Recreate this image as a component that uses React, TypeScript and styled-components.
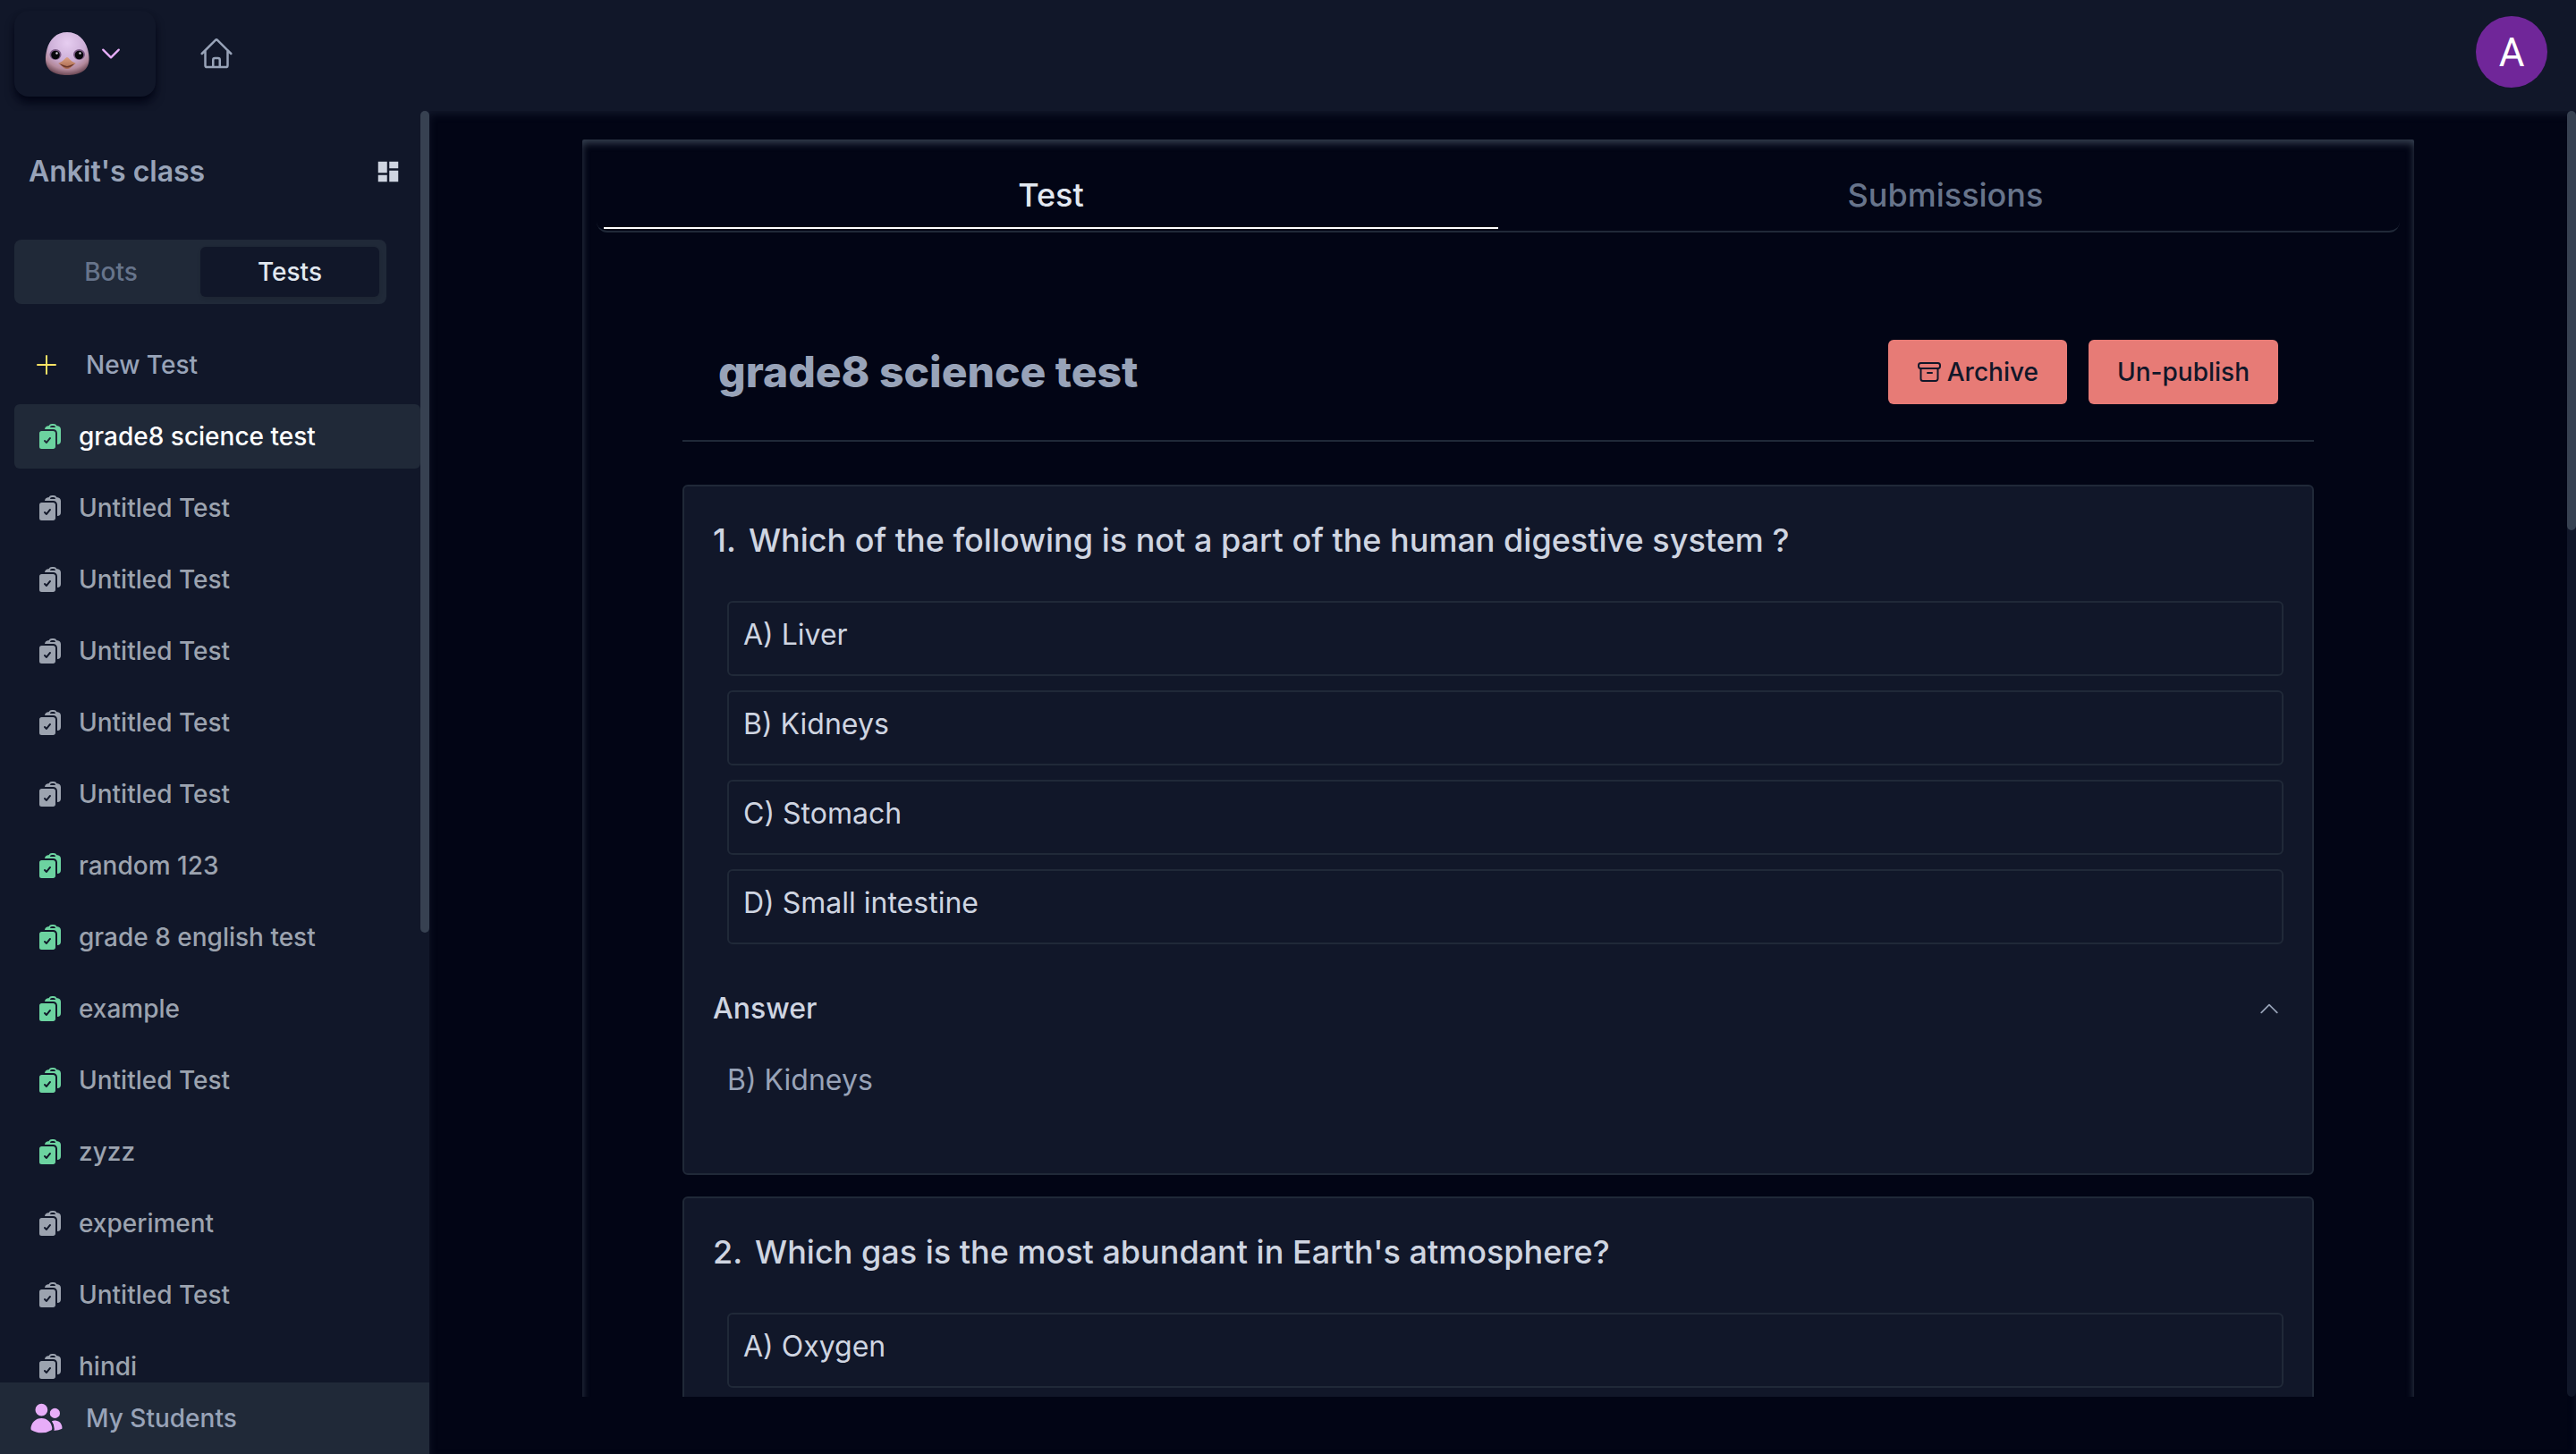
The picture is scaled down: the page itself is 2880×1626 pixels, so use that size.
import React, { useState } from "react";
import styled, { createGlobalStyle } from "styled-components";
import {
  HiOutlineHome,
  HiOutlinePlus,
  HiOutlineChevronUp,
  HiOutlineChevronDown,
  HiClipboardDocumentCheck,
  HiUsers,
} from "react-icons/hi2";
import { MdDashboard } from "react-icons/md";

const color = {
  page: "#020515",
  surface: "#111729",
  raised: "#202938",
  thumb: "#374151",
  text: "#cfd5e1",
  bright: "#e2e8f0",
  muted: "#98a3b8",
  dim: "#67748b",
  row: "#9ca3af",
  green: "#6cd3a0",
  pink: "#e7adf8",
  yellow: "#fbe264",
  coral: "#e77b76",
  purple: "#702699",
};

const GlobalStyle = createGlobalStyle`
  * { box-sizing: border-box; }
  html, body, #root { height: 100%; }
  body {
    margin: 0;
    background: ${color.page};
    color: ${color.text};
    font-family: Inter, "Liberation Sans", sans-serif;
    font-size: 28px;
    line-height: 40px;
  }
  button { font: inherit; border: 0; padding: 0; background: none; color: inherit; cursor: pointer; }
  h1, h2, h3, p, ol, ul { margin: 0; padding: 0; }
  ol, ul { list-style: none; }
  a { color: inherit; text-decoration: none; }
  svg { display: block; flex: none; }
`;

const Shell = styled.div`
  height: 100vh;
  display: flex;
  flex-direction: column;
  overflow: hidden;
`;

const Header = styled.header`
  flex: none;
  display: flex;
  align-items: center;
  padding: 12px 32px 16px 16px;
  background: ${color.surface};
`;

const BrandButton = styled.button`
  display: flex;
  align-items: center;
  gap: 8px;
  height: 96px;
  padding: 0 36px 0 34px;
  border-radius: 16px;
  background: ${color.surface};
  color: ${color.pink};
  box-shadow: 0 8px 12px -2px ${color.page}, 0 4px 8px -4px ${color.page};
`;

const BrandChevron = styled(HiOutlineChevronDown)`
  path { stroke-width: 2; }
`;

const HomeLink = styled.a`
  margin-left: 48px;
  color: ${color.muted};
`;

const Avatar = styled.button`
  width: 80px;
  height: 80px;
  margin: 0 0 4px auto;
  padding-top: 2px;
  border-radius: 50%;
  background: ${color.purple};
  color: #fff;
  font-family: Roboto, sans-serif;
  font-size: 44px;
`;

const Body = styled.div`
  flex: 1;
  min-height: 0;
  display: flex;
`;

const Sidebar = styled.aside`
  width: 480px;
  flex: none;
  display: flex;
  flex-direction: column;
  background: ${color.surface};
`;

const ScrollArea = styled.div`
  flex: 1;
  min-height: 0;
  display: flex;
`;

const Track = styled.div<{ $visible?: boolean }>`
  flex: none;
  width: 10px;
  border-radius: 5px;
  background: ${(p) => (p.$visible ? color.surface : "transparent")};
`;

const Thumb = styled.div<{ $size: number }>`
  height: ${(p) => p.$size}%;
  border-radius: 5px;
  background: ${color.thumb};
`;

const SideContent = styled.div`
  flex: 1;
  min-width: 0;
  overflow: hidden;
  padding: 44px 0 0 16px;
`;

const ClassHeader = styled.div`
  display: flex;
  align-items: center;
  justify-content: space-between;
  padding: 0 21px 0 16px;
  margin-bottom: 52px;
`;

const ClassName = styled.h2`
  color: ${color.muted};
  font-size: 32px;
  line-height: 48px;
  font-weight: 600;
`;

const IconButton = styled.button`
  color: ${color.text};
`;

const Switcher = styled.div`
  display: grid;
  grid-template-columns: 1fr 1fr;
  margin: 0 38px 32px 0;
  padding: 8px;
  border-radius: 8px;
  background: ${color.raised};
`;

const SwitchTab = styled.button<{ $active: boolean }>`
  height: 56px;
  border-radius: 6px;
  font-weight: 500;
  background: ${(p) => (p.$active ? color.surface : "transparent")};
  color: ${(p) => (p.$active ? color.bright : color.dim)};
  box-shadow: ${(p) => (p.$active ? "0 2px 4px rgba(0, 0, 0, 0.1)" : "none")};
`;

const RowList = styled.ul`
  display: flex;
  flex-direction: column;
  gap: 8px;
`;

const NewTestRow = styled.button`
  display: flex;
  align-items: center;
  gap: 28px;
  width: 100%;
  height: 72px;
  padding: 0 20px;
  color: ${color.muted};
  font-weight: 500;

  svg { color: ${color.yellow}; }
`;

const TestRow = styled.button<{ $active: boolean; $published: boolean }>`
  display: flex;
  align-items: center;
  gap: 16px;
  width: 100%;
  height: 72px;
  padding: 0 24px;
  border-radius: 6px;
  font-weight: 500;
  background: ${(p) => (p.$active ? color.raised : "transparent")};
  color: ${(p) => (p.$active ? "#fff" : color.row)};

  svg { color: ${(p) => (p.$published ? color.green : color.row)}; }
`;

const StudentsLink = styled.a`
  flex: none;
  display: flex;
  align-items: center;
  gap: 24px;
  height: 80px;
  padding: 0 32px;
  background: ${color.raised};
  color: ${color.muted};
  font-weight: 500;

  svg { color: ${color.pink}; }
`;

const Main = styled.main`
  flex: 1;
  min-width: 0;
  display: flex;
  padding-bottom: 64px;
  box-shadow: inset 0 4px 8px ${color.surface};
`;

const MainContent = styled.div`
  flex: 1;
  min-width: 0;
  overflow: hidden;
  padding-top: 32px;
`;

const Panel = styled.div`
  max-width: 2048px;
  margin: 0 auto;
  padding: 16px;
  border-radius: 2px;
  box-shadow: inset 0 4px 8px ${color.thumb};
`;

const TabList = styled.div`
  display: grid;
  grid-template-columns: 1fr 1fr;
  padding: 8px 8px 2px;
  border-bottom: 2px solid ${color.raised};
  border-radius: 12px;
`;

const Tab = styled.button<{ $active: boolean }>`
  height: 76px;
  padding-top: 2px;
  border-bottom: 2px solid ${(p) => (p.$active ? "#fff" : "transparent")};
  color: ${(p) => (p.$active ? color.bright : color.dim)};
  font-size: 36px;
  font-weight: 500;
`;

const TestContent = styled.section`
  padding: 120px 96px 0;
`;

const TitleBar = styled.div`
  display: flex;
  align-items: center;
  justify-content: space-between;
  padding: 0 40px 40px;
  margin-bottom: 48px;
  border-bottom: 2px solid ${color.raised};
`;

const Title = styled.h1`
  color: ${color.muted};
  font-size: 48px;
  line-height: 64px;
  font-weight: 800;
`;

const Actions = styled.div`
  display: flex;
  gap: 24px;
`;

const ActionButton = styled.button`
  display: flex;
  align-items: center;
  gap: 6px;
  height: 72px;
  padding: 0 32px;
  border-radius: 6px;
  background: ${color.coral};
  color: ${color.surface};
  font-weight: 500;
`;

const Questions = styled.ol`
  display: flex;
  flex-direction: column;
  gap: 24px;
`;

const Card = styled.li`
  padding: 32px;
  border: 2px solid ${color.raised};
  border-radius: 6px;
  background: ${color.surface};
`;

const Prompt = styled.h3`
  display: flex;
  gap: 14px;
  margin-bottom: 40px;
  font-size: 36px;
  line-height: 56px;
  font-weight: 500;
`;

const Options = styled.ul`
  display: flex;
  flex-direction: column;
  gap: 16px;
  margin: 0 0 48px 16px;
`;

const Option = styled.li`
  padding: 12px 16px 20px;
  border: 2px solid ${color.raised};
  border-radius: 6px;
  font-size: 32px;
  line-height: 48px;
`;

const AnswerToggle = styled.button`
  display: flex;
  align-items: center;
  justify-content: space-between;
  width: 100%;
  padding-right: 2px;
  font-size: 32px;
  line-height: 48px;
  font-weight: 500;

  svg { color: ${color.muted}; }
`;

const AnswerText = styled.p`
  padding: 32px 16px 48px;
  color: ${color.muted};
  font-size: 32px;
  line-height: 48px;
`;

const Bird = () => (
  <svg width="52" height="52" viewBox="0 0 52 52" aria-hidden="true">
    <defs>
      <radialGradient id="head" cx="0.5" cy="0.25" r="0.82">
        <stop offset="0" stopColor="#e6cdf0" />
        <stop offset="0.5" stopColor="#cdb0d8" />
        <stop offset="0.75" stopColor="#b48a9c" />
        <stop offset="1" stopColor="#4a2a33" />
      </radialGradient>
      <linearGradient id="beak" x1="0" y1="0" x2="0" y2="1">
        <stop offset="0" stopColor="#dba183" />
        <stop offset="1" stopColor="#a8664d" />
      </linearGradient>
    </defs>
    <path d="M25 2C37 2 45 10 48 21c1 4 1.800 8 1.500 12C49 45 39 50 25 50S1.500 45 1 33c-.200-4 .500-8 1.500-12C5.500 10 13 2 25 2Z" fill="url(#head)" />
    <ellipse cx="12" cy="27" rx="6.500" ry="6" fill="#7b5a85" />
    <ellipse cx="38.500" cy="27" rx="6.500" ry="6" fill="#7b5a85" />
    <circle cx="12" cy="27.500" r="4.800" fill="#08070c" />
    <circle cx="38.500" cy="27.500" r="4.800" fill="#08070c" />
    <circle cx="13.500" cy="25.500" r="1.200" fill="#d8d0de" />
    <circle cx="39.500" cy="25.500" r="1.200" fill="#d8d0de" />
    <path d="M25 30c2 0 3 4 10 7-4 1-5 6-10 6s-6-5-10-6c7-3 8-7 10-7Z" fill="url(#beak)" />
    <path d="M16 37.500c4 0 6 2.500 9 2.500s5-2.500 9-2.500c-3 1.500-5 4-9 4s-6-2.500-9-4Z" fill="#6b3629" />
  </svg>
);

const ArchiveIcon = () => (
  <svg width="28" height="28" viewBox="0 0 28 28" fill="none" stroke="currentColor" strokeWidth="2" strokeLinecap="round" strokeLinejoin="round" aria-hidden="true">
    <rect x="2" y="4" width="24" height="6" rx="2.500" />
    <path d="M4.500 10v11.500a2.500 2.500 0 0 0 2.500 2.500h14a2.500 2.500 0 0 0 2.500-2.500V10M12 15h5" />
  </svg>
);

const tests = [
  { name: "grade8 science test", published: true },
  { name: "Untitled Test", published: false },
  { name: "Untitled Test", published: false },
  { name: "Untitled Test", published: false },
  { name: "Untitled Test", published: false },
  { name: "Untitled Test", published: false },
  { name: "random 123", published: true },
  { name: "grade 8 english test", published: true },
  { name: "example", published: true },
  { name: "Untitled Test", published: true },
  { name: "zyzz", published: true },
  { name: "experiment", published: false },
  { name: "Untitled Test", published: false },
  { name: "hindi", published: false },
];

const questions = [
  {
    prompt: "Which of the following is not a part of the human digestive system ?",
    options: ["A) Liver", "B) Kidneys", "C) Stomach", "D) Small intestine"],
    answer: "B) Kidneys",
  },
  {
    prompt: "Which gas is the most abundant in Earth's atmosphere?",
    options: ["A) Oxygen"],
    answer: "",
  },
];

type Question = (typeof questions)[number];

const QuestionCard = ({ question, number }: { question: Question; number: number }) => {
  const [open, setOpen] = useState(true);
  return (
    <Card>
      <Prompt>
        <span>{number}.</span>
        <span>{question.prompt}</span>
      </Prompt>
      <Options>
        {question.options.map((option) => (
          <Option key={option}>{option}</Option>
        ))}
      </Options>
      {question.answer && (
        <>
          <AnswerToggle type="button" aria-expanded={open} onClick={() => setOpen(!open)}>
            Answer
            {open ? <HiOutlineChevronUp size={28} /> : <HiOutlineChevronDown size={28} />}
          </AnswerToggle>
          {open && <AnswerText>{question.answer}</AnswerText>}
        </>
      )}
    </Card>
  );
};

export default function App() {
  const [mode, setMode] = useState("Tests");
  const [tab, setTab] = useState("Test");
  const [selected, setSelected] = useState(0);

  return (
    <>
      <GlobalStyle />
      <Shell>
        <Header>
          <BrandButton type="button" aria-label="Switch workspace">
            <Bird />
            <BrandChevron size={28} />
          </BrandButton>
          <HomeLink href="#home" aria-label="Home">
            <HiOutlineHome size={40} />
          </HomeLink>
          <Avatar type="button">A</Avatar>
        </Header>
        <Body>
          <Sidebar>
            <ScrollArea>
              <SideContent>
                <ClassHeader>
                  <ClassName>Ankit's class</ClassName>
                  <IconButton type="button" aria-label="Dashboard">
                    <MdDashboard size={30} />
                  </IconButton>
                </ClassHeader>
                <Switcher>
                  {["Bots", "Tests"].map((name) => (
                    <SwitchTab key={name} type="button" $active={mode === name} onClick={() => setMode(name)}>
                      {name}
                    </SwitchTab>
                  ))}
                </Switcher>
                <RowList>
                  <li>
                    <NewTestRow type="button">
                      <HiOutlinePlus size={32} />
                      New Test
                    </NewTestRow>
                  </li>
                  {tests.map((test, index) => (
                    <li key={index}>
                      <TestRow
                        type="button"
                        $active={selected === index}
                        $published={test.published}
                        onClick={() => setSelected(index)}
                      >
                        <HiClipboardDocumentCheck size={32} />
                        {test.name}
                      </TestRow>
                    </li>
                  ))}
                </RowList>
              </SideContent>
              <Track>
                <Thumb $size={64.6} />
              </Track>
            </ScrollArea>
            <StudentsLink href="#students">
              <HiUsers size={40} />
              My Students
            </StudentsLink>
          </Sidebar>
          <Main>
            <MainContent>
              <Panel>
                <TabList role="tablist">
                  {["Test", "Submissions"].map((name) => (
                    <Tab
                      key={name}
                      type="button"
                      role="tab"
                      aria-selected={tab === name}
                      $active={tab === name}
                      onClick={() => setTab(name)}
                    >
                      {name}
                    </Tab>
                  ))}
                </TabList>
                <TestContent>
                  <TitleBar>
                    <Title>grade8 science test</Title>
                    <Actions>
                      <ActionButton type="button">
                        <ArchiveIcon />
                        Archive
                      </ActionButton>
                      <ActionButton type="button">Un-publish</ActionButton>
                    </Actions>
                  </TitleBar>
                  <Questions>
                    {questions.map((question, index) => (
                      <QuestionCard key={question.prompt} question={question} number={index + 1} />
                    ))}
                  </Questions>
                </TestContent>
              </Panel>
            </MainContent>
            <Track $visible>
              <Thumb $size={32.6} />
            </Track>
          </Main>
        </Body>
      </Shell>
    </>
  );
}
